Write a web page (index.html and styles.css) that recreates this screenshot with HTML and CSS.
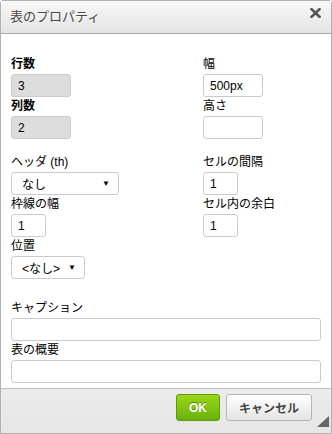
FILE: index.html
```html
<!DOCTYPE html>
<html>
<head>
  <meta charset="utf-8">
  <title>表のプロパティ</title>
  <link rel="stylesheet" href="styles.css">
</head>
<body>
  <div class="dialog">
    <div class="title">
      <span>表のプロパティ</span>
      <svg class="close" width="11" height="10" viewBox="0 0 11 10">
        <path d="M1.5 1.2 L9.5 8.8 M9.5 1.2 L1.5 8.8" stroke="#555" stroke-width="2.6" stroke-linecap="square"/>
      </svg>
    </div>
    <div class="content">
      <div class="grid">
        <div class="field"><label class="req">行数</label><input class="text w60" value="3" readonly></div>
        <div class="field"><label>幅</label><input class="text w60 plain" value="500px"></div>
        <div class="field"><label class="req">列数</label><input class="text w60" value="2" readonly></div>
        <div class="field"><label>高さ</label><input class="text w60 plain" value=""></div>
      </div>
      <div class="grid group2">
        <div class="field"><label>ヘッダ (th)</label><div class="select w108"><span>なし</span><span class="arrow">▼</span></div></div>
        <div class="field"><label>セルの間隔</label><input class="text w35 plain" value="1"></div>
        <div class="field"><label>枠線の幅</label><input class="text w35 plain" value="1"></div>
        <div class="field"><label>セル内の余白</label><input class="text w35 plain" value="1"></div>
        <div class="field"><label>位置</label><div class="select w74"><span>&lt;なし&gt;</span><span class="arrow">▼</span></div></div>
      </div>
      <div class="group3">
        <div class="field"><label>キャプション</label><input class="text full plain" value=""></div>
        <div class="field"><label>表の概要</label><input class="text full plain" value=""></div>
      </div>
    </div>
    <div class="footer">
      <button class="ok">OK</button>
      <button class="cancel">キャンセル</button>
      <span class="grip"></span>
    </div>
  </div>
</body>
</html>
```
FILE: styles.css
```css
body {
  margin: 0;
  font-family: "Liberation Sans", "Noto Sans CJK JP", sans-serif;
  font-size: 12px;
  color: #000;
}
.dialog {
  width: 332px;
  height: 434px;
  box-sizing: border-box;
  border: 1px solid #b2b2b2;
  border-radius: 3px 3px 0 0;
  display: flex;
  flex-direction: column;
  background-color: #fff;
}
.title {
  height: 32px;
  display: flex;
  justify-content: space-between;
  padding: 0 10px 0 9px;
  background: linear-gradient(#f8f8f8, #e4e4e4);
  border-bottom: 1px solid #a8a8a8;
  font-size: 13px;
  line-height: 32px;
  color: #474747;
  text-shadow: 0 1px 0 rgba(255,255,255,0.75);
}
.close {
  margin-top: 7px;
}
.content {
  flex: 1;
  padding: 21px 10px 0 10px;
}
.grid {
  display: grid;
  grid-template-columns: 192px 1fr;
}
.group2 {
  margin-top: 14px;
}
.group3 {
  margin-top: 20px;
}
.field label {
  display: block;
  padding-top: 1px;
  margin-bottom: 2px;
  line-height: 16px;
}
.field label.req {
  font-weight: bold;
}
.text {
  display: block;
  box-sizing: border-box;
  height: 23px;
  margin: 0;
  padding: 0 6px;
  border: 1px solid #c9cccf;
  border-radius: 3px;
  background-color: #ddd;
  font-family: inherit;
  font-size: 12px;
  color: #000;
  outline: none;
}
.text.plain {
  background-color: #fff;
}
.w60 { width: 60px; }
.w35 { width: 35px; }
.full { width: 310px; }
.select {
  box-sizing: border-box;
  height: 23px;
  display: flex;
  align-items: center;
  justify-content: space-between;
  padding: 0 8px 0 10px;
  border: 1px solid #c9cccf;
  border-radius: 3px;
  background-color: #fff;
}
.w108 { width: 108px; }
.w74 { width: 74px; }
.select .arrow {
  font-size: 8px;
  color: #000;
}
.footer {
  height: 39px;
  display: flex;
  justify-content: flex-end;
  align-items: flex-start;
  padding: 5px 2px 0 0;
  box-sizing: content-box;
  border-top: 1px solid #bfbfbf;
  background: linear-gradient(#ebebeb, #e6e6e6);
}
.footer button {
  height: 27px;
  border-radius: 3px;
  font-family: inherit;
  font-size: 12px;
  font-weight: bold;
  padding: 0;
  cursor: pointer;
}
.ok {
  width: 44px;
  margin-right: 6px;
  border: 1px solid #5d9a09;
  background: linear-gradient(#9ad717, #69b10b);
  color: #fff;
  text-shadow: 0 -1px 0 #55830c;
}
.cancel {
  width: 86px;
  border: 1px solid #b6b6b6;
  background: linear-gradient(#fff, #e4e4e4);
  color: #474747;
  text-shadow: 0 1px 0 rgba(255,255,255,0.75);
}
.grip {
  align-self: flex-end;
  width: 0;
  height: 0;
  margin: 0 0 6px 5px;
  border-left: 12px solid transparent;
  border-bottom: 11px solid #666;
}
```
